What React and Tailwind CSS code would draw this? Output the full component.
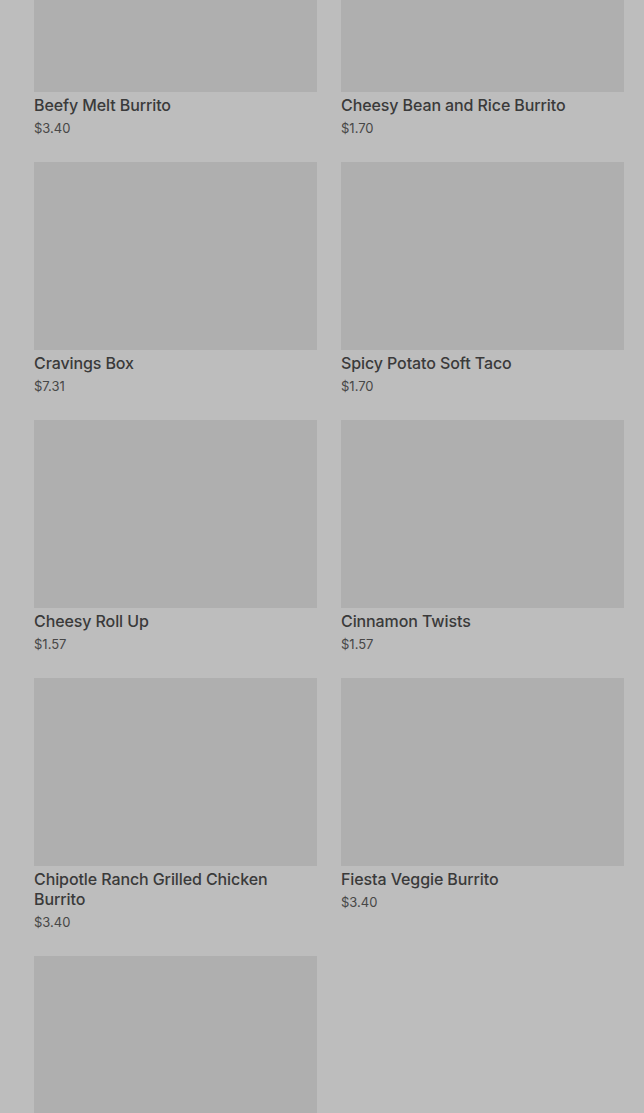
const items = [
  { name: 'Beefy Melt Burrito', price: '$3.40' },
  { name: 'Cheesy Bean and Rice Burrito', price: '$1.70' },
  { name: 'Cravings Box', price: '$7.31' },
  { name: 'Spicy Potato Soft Taco', price: '$1.70' },
  { name: 'Cheesy Roll Up', price: '$1.57' },
  { name: 'Cinnamon Twists', price: '$1.57' },
  { name: 'Chipotle Ranch Grilled Chicken Burrito', price: '$3.40' },
  { name: 'Fiesta Veggie Burrito', price: '$3.40' },
  { name: '', price: '' },
];

function ItemCard({ item }) {
  return (
    <div className="flex flex-col">
      <div className="h-[188px] bg-[#afafaf]" />
      {item.name && (
        <div className="pt-[3px]">
          <p className="text-[16px] leading-[20px] font-medium tracking-[-0.1px] text-[#3a3a3a]">{item.name}</p>
          <p className="mt-[3px] text-[13px] leading-[20px] text-[#474747]">{item.price}</p>
        </div>
      )}
    </div>
  );
}

export default function App() {
  return (
    <div className="h-[1113px] overflow-hidden bg-[#bdbdbd] pl-[34px] pr-[20px] font-['Inter',sans-serif]">
      <div className="-mt-[96px] grid grid-cols-2 gap-x-[24px] gap-y-[24px]">
        {items.map((item, i) => (
          <ItemCard key={i} item={item} />
        ))}
      </div>
    </div>
  );
}
